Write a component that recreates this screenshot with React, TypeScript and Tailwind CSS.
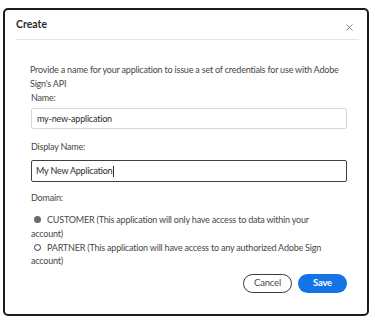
import React from "react";

export default function App() {
  const font = { fontFamily: "Lato, 'Liberation Sans', sans-serif" };
  return (
    <div className="w-[375px] h-[323px] bg-white pt-[8px] pl-[3px]" style={font}>
      <div className="w-[366px] h-[308px] border-2 border-[#1c1c1c] rounded-[5px] flex flex-col">
        <div className="ml-[11px] mr-[8px] h-[30px] border-b border-[#e4e4e4] flex items-center justify-between shrink-0">
          <span className="text-[10.5px] font-bold text-[#2c2c2c]">Create</span>
          <svg width="7" height="7" viewBox="0 0 7 7" className="mr-[6px] mt-[6px]">
            <path d="M0.5 0.5 L6.5 6.5 M6.5 0.5 L0.5 6.5" stroke="#8a8a8a" strokeWidth="1" />
          </svg>
        </div>
        <div className="pl-[26px] pr-[20px] pt-[23px] flex flex-col text-[9px] tracking-[-0.2px] leading-[14px] text-[#474747]">
          <p className="-ml-[1px]">
            Provide a name for your application to issue a set of credentials for use with Adobe Sign's API
          </p>
          <label>Name:</label>
          <div className="mt-[3px] h-[21px] border border-[#d8d8d8] rounded-[2px] flex items-center pl-[5px] text-[#2c2c2c]">
            my-new-application
          </div>
          <label className="mt-[11px]">Display Name:</label>
          <div className="mt-[6px] h-[22px] border-[1.5px] border-[#3f3f3f] rounded-[2px] flex items-center pl-[4px] text-[#2c2c2c]">
            My New Application
            <span className="inline-block w-0 h-[11px] border-l border-[#2c2c2c] ml-[1px]" />
          </div>
          <label className="mt-[9px]">Domain:</label>
          <div className="mt-[8px] pr-[12px] leading-[13.5px]">
            <span className="inline-block w-[7px] h-[7px] rounded-full bg-[#6b6b6b] ml-[3px] mr-[6px] align-[0px]" />
            CUSTOMER (This application will only have access to data within your account)
          </div>
          <div className="mt-[0.5px] pr-[12px] leading-[13.5px]">
            <span className="inline-block w-[7px] h-[7px] rounded-full border-[1.3px] border-[#3a3a3a] ml-[3px] mr-[6px] align-[0px]" />
            PARTNER (This application will have access to any authorized Adobe Sign account)
          </div>
          <div className="mt-[6px] flex justify-end gap-[6px]">
            <button className="w-[49px] h-[19px] rounded-full border-[1.5px] border-[#3a3a3a] text-[9.5px] text-[#4b4b4b] flex items-center justify-center">
              Cancel
            </button>
            <button className="w-[49px] h-[19px] rounded-full bg-[#1473e6] text-[9.5px] font-bold text-white flex items-center justify-center">
              Save
            </button>
          </div>
        </div>
      </div>
    </div>
  );
}
